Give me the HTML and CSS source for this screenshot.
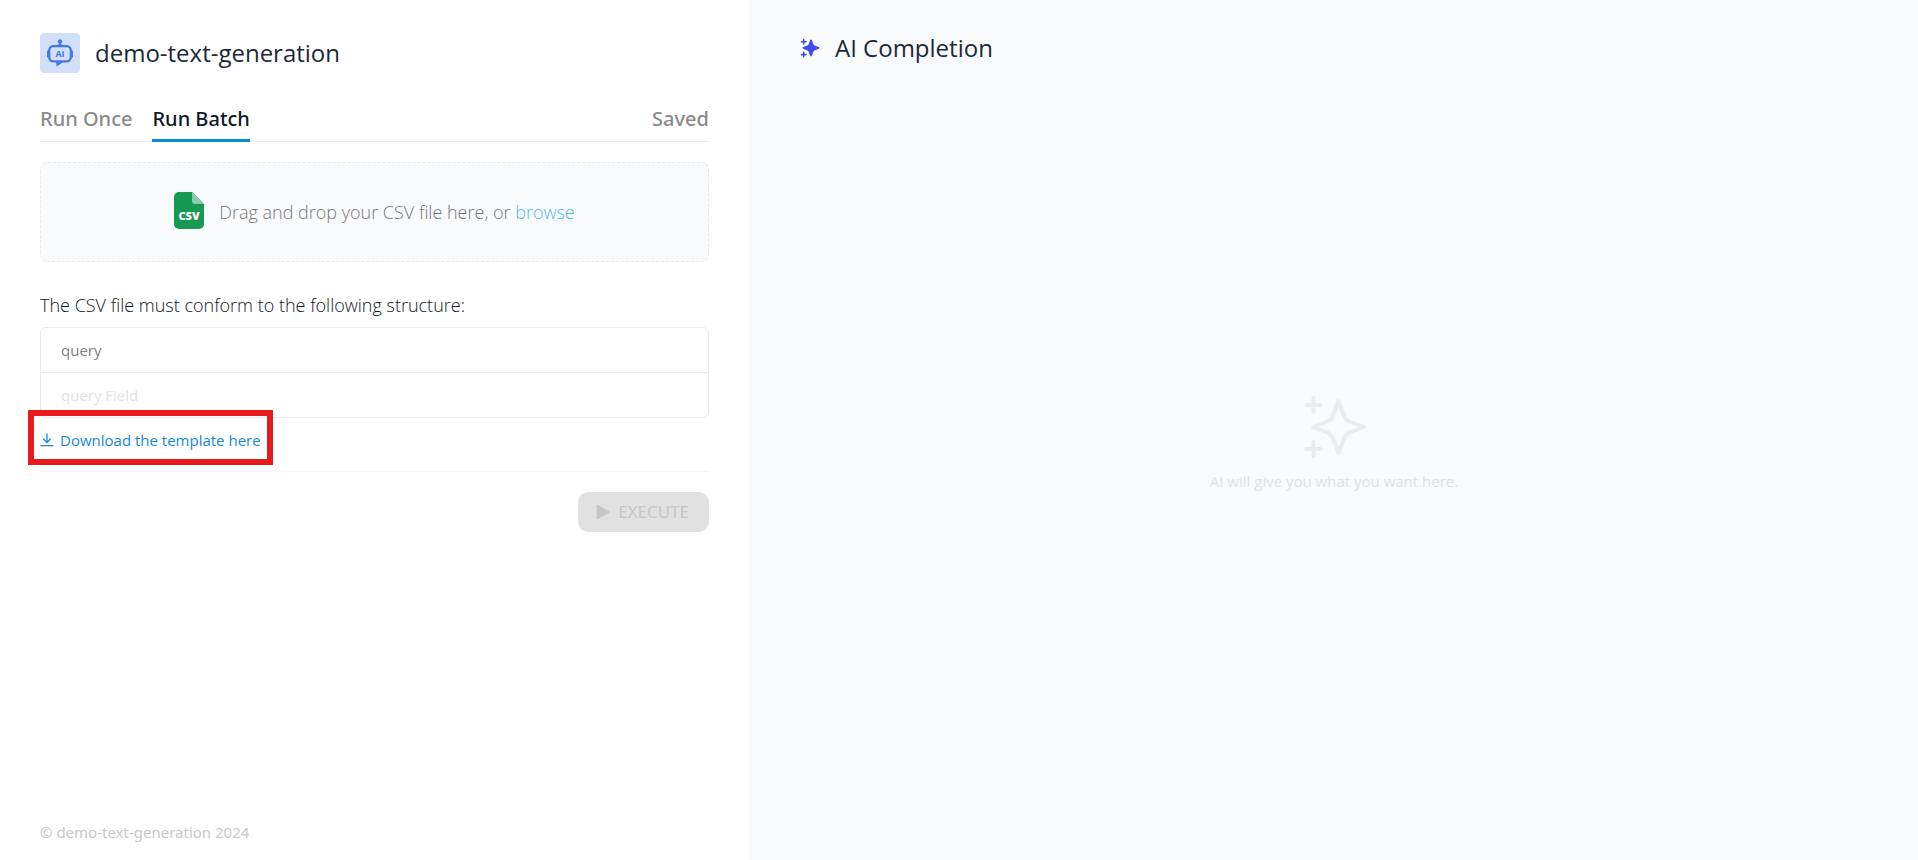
FILE: index.html
```html
<!DOCTYPE html>
<html lang="en">
<head>
<meta charset="utf-8">
<meta name="viewport" content="width=device-width, initial-scale=1">
<title>demo-text-generation</title>
<link rel="stylesheet" href="styles.css">
</head>
<body>
<div class="app">
  <section class="panel">
    <header class="brand">
      <svg class="brand-logo" viewBox="0 0 40 40" aria-hidden="true">
        <rect width="40" height="40" rx="4" fill="#d1dff8"/>
        <g fill="#4579e6">
          <circle cx="20" cy="8.500" r="2.200"/>
          <path d="M19.200 9h1.600v2.500h2v2h-5.600v-2h2z"/>
          <rect x="7" y="17" width="3" height="8" rx="1.500"/>
          <rect x="30" y="17" width="3" height="8" rx="1.500"/>
        </g>
        <rect x="9.200" y="13.200" width="21.600" height="15.200" rx="4.200" fill="#d1dff8" stroke="#4579e6" stroke-width="2.300"/>
        <path d="M16 28h9l-8.500 5.500z" fill="#4579e6"/>
        <text class="brand-logo-text" x="20" y="24" text-anchor="middle">AI</text>
      </svg>
      <h1 class="brand-name">demo-text-generation</h1>
    </header>

    <nav class="tabs">
      <button class="tab" type="button">Run Once</button>
      <button class="tab tab-active" type="button">Run Batch</button>
      <button class="tab tab-end" type="button">Saved</button>
    </nav>

    <div class="dropzone">
      <svg class="csv-icon" viewBox="0 0 30 37" aria-hidden="true">
        <path d="M5 0h13l12 12v20a5 5 0 0 1-5 5H5a5 5 0 0 1-5-5V5a5 5 0 0 1 5-5z" fill="#169951"/>
        <path d="M18 0l12 12h-9a3 3 0 0 1-3-3z" fill="#8bcca8"/>
        <text class="csv-icon-text" x="15" y="28" text-anchor="middle">CSV</text>
      </svg>
      <p class="dropzone-text">Drag and drop your CSV file here, or <a class="browse" href="#">browse</a></p>
    </div>

    <h2 class="structure-title">The CSV file must conform to the following structure:</h2>
    <div class="structure">
      <table class="structure-table">
        <thead><tr><th scope="col">query</th></tr></thead>
        <tbody><tr><td>query Field</td></tr></tbody>
      </table>
    </div>

    <a class="download" href="#">
      <svg class="download-icon" viewBox="0 0 14 14" fill="none" stroke="currentColor" stroke-width="1.300" stroke-linecap="round" stroke-linejoin="round" aria-hidden="true">
        <path d="M7 1v8.500M3.500 6L7 9.500 10.500 6M1 12.700h12"/>
      </svg>
      Download the template here
      <span class="highlight"></span>
    </a>

    <div class="actions">
      <button class="execute" type="button" disabled>
        <svg class="execute-icon" viewBox="0 0 14 16" aria-hidden="true">
          <path d="M1.500 2v12L12.500 8z" fill="#c6c6c7" stroke="#c6c6c7" stroke-width="2" stroke-linejoin="round"/>
        </svg>
        EXECUTE
      </button>
    </div>

    <footer class="footer">© demo-text-generation 2024</footer>
  </section>

  <main class="result">
    <header class="result-header">
      <svg class="sparkle" viewBox="0 0 20 20" aria-hidden="true">
        <path d="M11 1.500c.3 0 .6.200.8.600l1.700 4.300c.2.500.5.800 1 1l4.300 1.700c.8.300.8 1.300 0 1.600l-4.300 1.700c-.5.200-.8.500-1 1l-1.700 4.300c-.3.800-1.300.8-1.600 0l-1.700-4.300c-.2-.5-.5-.8-1-1l-4.300-1.700c-.8-.3-.8-1.300 0-1.600l4.300-1.700c.5-.2.8-.5 1-1l1.700-4.300c.2-.4.500-.6.800-.6z" fill="#444ce7"/>
        <path d="M3.700 1.500v4.400M1.500 3.700h4.400M3.700 14.400v4.400M1.500 16.600h4.400" stroke="#444ce7" stroke-width="1.600" stroke-linecap="round"/>
      </svg>
      <h2 class="result-title">AI Completion</h2>
    </header>
    <div class="empty">
      <svg class="empty-icon" viewBox="0 0 64 64" fill="none" stroke="#eaecf0" stroke-width="4" stroke-linecap="round" stroke-linejoin="round" aria-hidden="true">
        <path d="M11.500 3v14M4.500 10h14M11.500 47v14M4.500 54h14"/>
        <path d="M36.500 6l5.500 14.500Q43.500 24.500 47.500 26.500L62 32l-14.500 5.500Q43.500 39.500 42 43.500L36.500 58 31 43.500Q29.500 39.500 25.500 37.500L11 32l14.500-5.500Q29.500 24.500 31 20.500z"/>
      </svg>
      <p class="empty-text">AI will give you what you want here.</p>
    </div>
  </main>
</div>
</body>
</html>
```
FILE: styles.css
```css
* { box-sizing: border-box; }

body {
  margin: 0;
  font-family: "Segoe UI", "Open Sans", "Noto Sans", sans-serif;
  font-size: 15px;
  line-height: 24px;
  color: #1d2939;
  background: #ffffff;
}

h1, h2, p { margin: 0; font-weight: 400; }
button { font: inherit; border: 0; }
a { text-decoration: none; }

.app { display: flex; min-height: 100vh; }

.panel {
  flex: 0 0 39.05%;
  display: flex;
  flex-direction: column;
  padding: 33px 40px 16px;
}

.brand { display: flex; align-items: center; gap: 15px; }
.brand-logo { width: 40px; height: 40px; }
.brand-logo-text { font-size: 9px; font-weight: 700; fill: #4579e6; }
.brand-name { font-size: 24px; line-height: 32px; }

.tabs {
  display: flex;
  gap: 20px;
  margin-top: 24px;
  border-bottom: 1px solid #eaecf0;
}
.tab {
  height: 45px;
  margin-bottom: -1px;
  padding: 2px 0 0;
  background: none;
  border-bottom: 3px solid transparent;
  font-family: "Noto Sans", sans-serif;
  font-size: 20px;
  font-weight: 500;
  color: #8a8a8a;
}
.tab-active { color: #101828; border-bottom-color: #098bd6; }
.tab-end { margin-left: auto; }

.dropzone {
  display: flex;
  align-items: center;
  justify-content: center;
  gap: 15px;
  height: 100px;
  margin-top: 20px;
  border: 1px dashed #eaeaeb;
  border-radius: 8px;
  background: #f9fafc;
}
.csv-icon { width: 30px; height: 37px; margin-bottom: 4px; }
.csv-icon-text { font-size: 11px; font-weight: 800; fill: #ffffff; }
.dropzone-text { font-size: 18px; font-weight: 300; color: #777777; }
.browse { color: #4fb9f0; }

.structure-title { margin-top: 31px; font-size: 18px; font-weight: 300; color: #101828; }

.structure {
  margin-top: 10px;
  border: 1px solid #eaeaeb;
  border-radius: 6px;
}
.structure-table { width: 100%; border-collapse: collapse; }
.structure-table th, .structure-table td {
  height: 45px;
  padding: 0 20px;
  font-weight: 400;
  text-align: left;
}
.structure-table th { height: 44px; color: #808080; border-bottom: 1px solid #eaeaeb; }
.structure-table td { color: #e2e2e2; }

.download {
  position: relative;
  display: flex;
  align-items: center;
  align-self: flex-start;
  gap: 6px;
  margin-top: 10px;
  color: #158bd4;
}
.download-icon { width: 14px; height: 14px; }
.highlight {
  position: absolute;
  inset: -18px -12px -13px;
  border: 6px solid #e71b1b;
  pointer-events: none;
}

.actions {
  display: flex;
  justify-content: flex-end;
  margin-top: 19px;
  padding-top: 20px;
  border-top: 1px solid #f7f7f7;
}
.execute {
  display: flex;
  align-items: center;
  gap: 8px;
  height: 40px;
  padding: 0 20px 0 18px;
  border-radius: 10px;
  background: #e1e1e1;
  font-size: 17px;
  color: #c6c6c7;
}
.execute-icon { width: 14px; height: 16px; }

.footer {
  margin-top: auto;
  font-family: "Noto Sans", sans-serif;
  color: #c8c8c8;
}

.result {
  flex: 1;
  display: flex;
  flex-direction: column;
  padding: 32px 50px 36px 51px;
  background: #f9fafc;
}
.result-header { display: flex; align-items: center; gap: 15px; }
.sparkle { width: 20px; height: 20px; }
.result-title { font-size: 24px; line-height: 32px; }
.empty {
  flex: 1;
  display: flex;
  flex-direction: column;
  align-items: center;
  justify-content: center;
  gap: 10px;
}
.empty-icon { width: 64px; height: 64px; }
.empty-text { color: #e2e2e2; }
```
